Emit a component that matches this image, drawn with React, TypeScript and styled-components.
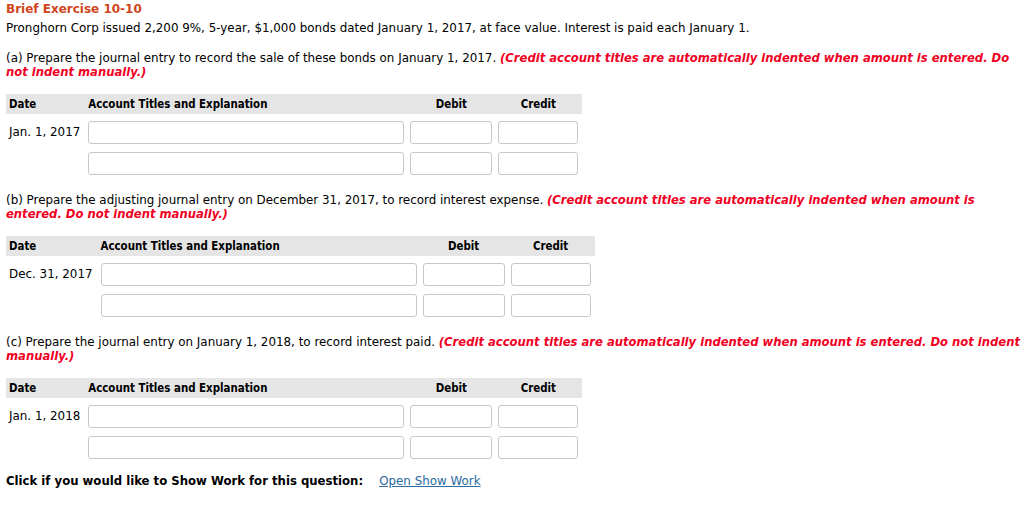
import React from 'react';
import styled, { createGlobalStyle } from 'styled-components';

const GlobalStyle = createGlobalStyle`
  body {
    margin: 0;
    background: #ffffff;
    font-family: "DejaVu Sans", Verdana, sans-serif;
    font-size: 11.9px;
    color: #000000;
  }
`;

const Page = styled.div`
  padding: 2px 0 0 6px;
`;

const Title = styled.div`
  font-weight: bold;
  font-size: 12px;
  line-height: 15px;
  color: #d0461c;
`;

const Paragraph = styled.p<{ top?: number }>`
  margin: ${({ top }) => top ?? 0}px 0 0 0;
  line-height: 14px;
`;

const Instruction = styled.span`
  color: #f0001f;
  font-weight: bold;
  font-style: italic;
  font-size: 11.6px;
`;

const Journal = styled.div<{ top?: number }>`
  display: inline-grid;
  grid-template-columns: auto 316px 82px 80px;
  column-gap: 6px;
  row-gap: 8px;
  margin-top: ${({ top }) => top ?? 22}px;
  padding-right: 4px;
`;

const HeaderBand = styled.div`
  grid-column: 1 / -1;
  grid-row: 1;
  background: #e5e5e5;
  margin-right: -4px;
  margin-bottom: -1px;
  height: 20px;
`;

const HeadCell = styled.div<{ col: number; align?: string }>`
  grid-row: 1;
  grid-column: ${({ col }) => col};
  margin-bottom: -1px;
  font-family: "DejaVu Sans Condensed", "DejaVu Sans", sans-serif;
  font-weight: bold;
  font-size: 11.4px;
  line-height: 20px;
  text-align: ${({ align }) => align ?? 'left'};
  padding-left: ${({ col }) => (col === 1 ? '3px' : '0')};
`;

const DateCell = styled.div`
  padding: 4px 2px 0 3px;
  line-height: 14px;
  white-space: nowrap;
`;

const EntryInput = styled.input`
  box-sizing: border-box;
  height: 23px;
  border: 1px solid #c8c8c8;
  border-radius: 3px;
  background: #ffffff;
  margin: 0;
  padding: 0 4px;
  font: inherit;
`;

const Footer = styled.div`
  margin-top: 15px;
  display: flex;
  align-items: center;
  gap: 16px;
  line-height: 14px;
`;

const FooterLabel = styled.span`
  font-weight: bold;
  font-size: 11.7px;
`;

const Link = styled.a`
  color: #2c6aa0;
  text-decoration: underline;
`;

type JournalProps = { date: string; top?: number };

const JournalTable: React.FC<JournalProps> = ({ date, top }) => (
  <Journal top={top}>
    <HeaderBand />
    <HeadCell col={1}>Date</HeadCell>
    <HeadCell col={2}>Account Titles and Explanation</HeadCell>
    <HeadCell col={3} align="center">Debit</HeadCell>
    <HeadCell col={4} align="center">Credit</HeadCell>
    <DateCell>{date}</DateCell>
    <EntryInput />
    <EntryInput />
    <EntryInput />
    <div />
    <EntryInput />
    <EntryInput />
    <EntryInput />
  </Journal>
);

const App: React.FC = () => (
  <>
    <GlobalStyle />
    <Page>
      <Title>Brief Exercise 10-10</Title>
      <Paragraph top={4}>
        Pronghorn Corp issued 2,200 9%, 5-year, $1,000 bonds dated January 1, 2017, at face value.
        Interest is paid each January 1.
      </Paragraph>
      <Paragraph top={16}>
        (a) Prepare the journal entry to record the sale of these bonds on January 1, 2017.{' '}
        <Instruction>
          (Credit account titles are automatically indented when amount is entered. Do not indent
          manually.)
        </Instruction>
      </Paragraph>
      <JournalTable date="Jan. 1, 2017" top={15} />
      <Paragraph top={18}>
        (b) Prepare the adjusting journal entry on December 31, 2017, to record interest expense.{' '}
        <Instruction>
          (Credit account titles are automatically indented when amount is entered. Do not indent
          manually.)
        </Instruction>
      </Paragraph>
      <JournalTable date="Dec. 31, 2017" top={15} />
      <Paragraph top={18}>
        (c) Prepare the journal entry on January 1, 2018, to record interest paid.{' '}
        <Instruction>
          (Credit account titles are automatically indented when amount is entered. Do not indent
          manually.)
        </Instruction>
      </Paragraph>
      <JournalTable date="Jan. 1, 2018" top={15} />
      <Footer>
        <FooterLabel>Click if you would like to Show Work for this question:</FooterLabel>
        <Link href="#">Open Show Work</Link>
      </Footer>
    </Page>
  </>
);

export default App;
